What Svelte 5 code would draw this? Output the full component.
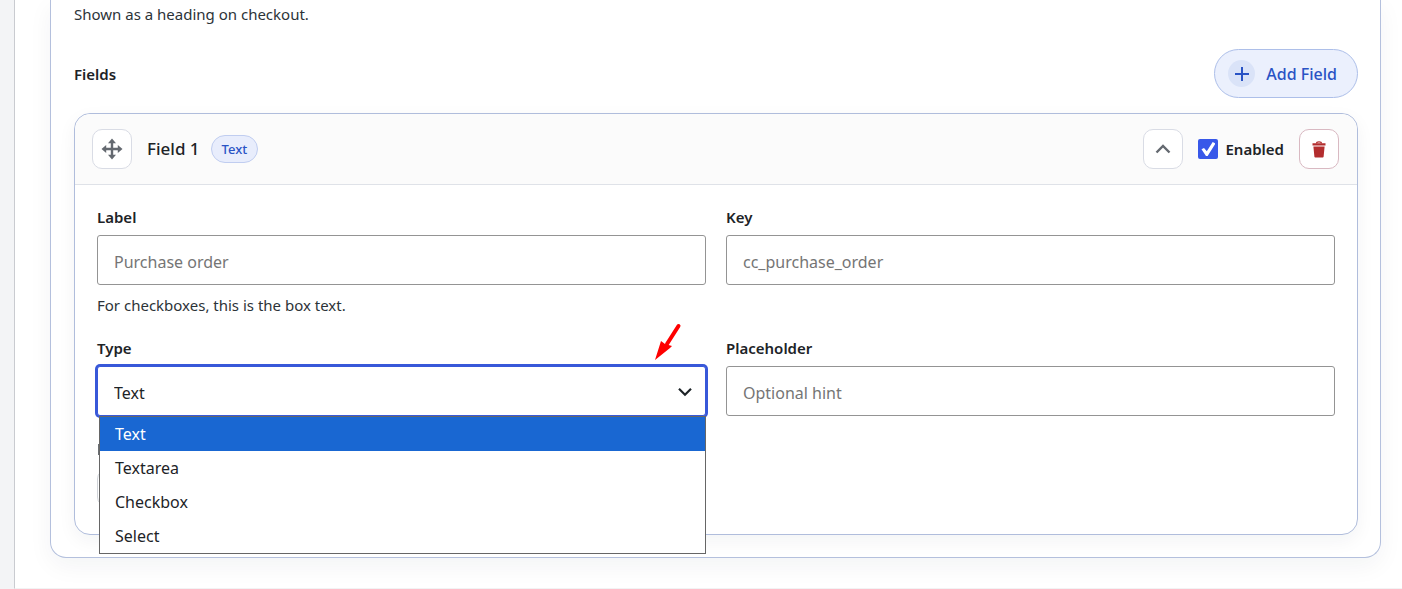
<script lang="ts">
	const types = ['Text', 'Textarea', 'Checkbox', 'Select'];

	let label = $state('');
	let key = $state('');
	let hint = $state('');
	let type = $state('Text');
	let enabled = $state(true);
	let menuOpen = $state(true);

	function pick(value: string) {
		type = value;
		menuOpen = false;
	}
</script>

<div class="page">
	<main class="panel">
		<section class="group">
			<p class="help">Shown as a heading on checkout.</p>

			<div class="group-bar">
				<h2>Fields</h2>
				<button class="add" type="button">
					<span class="plus">
						<svg width="16" height="16" viewBox="0 0 16 16"><path d="M8 1v14M1 8h14" fill="none" stroke="currentColor" stroke-width="2" /></svg>
					</span>
					Add Field
				</button>
			</div>

			<article class="field-card">
				<header>
					<button class="icon-btn" type="button" aria-label="Move field">
						<svg width="22" height="22" viewBox="0 0 22 22">
							<path d="M11 3v16M3 11h16" stroke="currentColor" stroke-width="2.4" />
							<path d="M11 0.5l4 4.7H7zM11 21.5l4-4.7H7zM0.5 11l4.7-4v8zM21.5 11l-4.7-4v8z" fill="currentColor" />
						</svg>
					</button>
					<h3>Field 1</h3>
					<span class="badge">{type}</span>

					<div class="actions">
						<button class="icon-btn" type="button" aria-label="Collapse field">
							<svg width="16" height="10" viewBox="0 0 16 10"><path d="M1.5 8.5L8 2l6.5 6.5" fill="none" stroke="currentColor" stroke-width="2.4" /></svg>
						</button>
						<label class="enabled">
							<input type="checkbox" bind:checked={enabled} />
							Enabled
						</label>
						<button class="icon-btn danger" type="button" aria-label="Delete field">
							<svg width="14" height="17" viewBox="0 0 14 17">
								<path d="M4.5 2.5c0-2.2 5-2.2 5 0" fill="none" stroke="currentColor" stroke-width="1.2" />
								<path d="M.5 2.3h13v2.2H.5zM1.4 5.4h11.2l-1 10.3q-.1.8-.9.8H3.3q-.8 0-.9-.8z" fill="currentColor" />
							</svg>
						</button>
					</div>
				</header>

				<div class="fields">
					<div class="field">
						<label for="label">Label</label>
						<input id="label" type="text" placeholder="Purchase order" bind:value={label} />
						<p class="help">For checkboxes, this is the box text.</p>
					</div>

					<div class="field">
						<label for="key">Key</label>
						<input id="key" type="text" placeholder="cc_purchase_order" bind:value={key} />
					</div>

					<div class="field">
						<label for="type">Type</label>
						<div class="select">
							<select id="type" class:open={menuOpen} bind:value={type}>
								{#each types as t}
									<option>{t}</option>
								{/each}
							</select>
							<svg class="chevron" width="14" height="10" viewBox="0 0 14 10"><path d="M1 1.8l6 6 6-6" fill="none" stroke="currentColor" stroke-width="2.2" /></svg>
							{#if menuOpen}
								<div class="menu" role="listbox" aria-label="Type">
									{#each types as t}
										<button type="button" role="option" aria-selected={t === type} onclick={() => pick(t)}>{t}</button>
									{/each}
								</div>
							{/if}
							<svg class="arrow" width="28" height="38" viewBox="0 0 28 38">
								<path d="M24.5 3L13 21" stroke="#fe0000" stroke-width="4" stroke-linecap="round" />
								<path d="M1 37L7 18l4 3 7 2-2 2z" fill="#fe0000" />
							</svg>
						</div>
					</div>

					<div class="field">
						<label for="hint">Placeholder</label>
						<input id="hint" type="text" placeholder="Optional hint" bind:value={hint} />
					</div>

					<div class="field covered">
						<button class="toggle" type="button" aria-label="Toggle option"></button>
					</div>
				</div>
			</article>
		</section>
	</main>
</div>

<style>
	:global(body) {
		margin: 0;
		background: #f3f4f6;
	}

	.page {
		padding-left: 14px;
		color: #1d2327;
		font-family: 'Segoe UI', 'Noto Sans', sans-serif;
		font-size: 15px;
		line-height: 22px;
	}

	.page * {
		box-sizing: border-box;
	}

	.panel {
		padding: 0 21px 30px 35px;
		border-left: 1px solid #c9cbd0;
		border-bottom: 1px solid #f2f3f4;
		background: #fff;
		overflow: hidden;
	}

	.group {
		padding: 3px 22px 22px 23px;
		border: 1px solid #b4c0dd;
		border-top: none;
		border-radius: 0 0 16px 16px;
		box-shadow: 0 8px 24px rgba(20, 30, 50, 0.05);
	}

	h2,
	h3,
	p {
		margin: 0;
	}

	button,
	input,
	select {
		font: inherit;
		color: inherit;
	}

	button {
		cursor: pointer;
	}

	.help {
		color: #2c3338;
	}

	.group-bar {
		display: flex;
		align-items: center;
		justify-content: space-between;
		margin: 24px 0 15px;
	}

	h2 {
		font-size: 15px;
		font-weight: 600;
	}

	.add {
		display: flex;
		align-items: center;
		gap: 11px;
		height: 49px;
		padding: 0 20px 0 13px;
		border: 1px solid #adbfe9;
		border-radius: 25px;
		background: #ebf0fd;
		color: #2953c5;
		font-size: 16px;
		font-weight: 500;
	}

	.plus {
		display: grid;
		place-items: center;
		width: 27px;
		height: 27px;
		border-radius: 50%;
		background: #dae3f8;
	}

	.field-card {
		border: 1px solid #b0bddc;
		border-radius: 16px;
		background: #fff;
		box-shadow: 0 6px 18px rgba(20, 30, 50, 0.05);
	}

	header {
		display: flex;
		align-items: center;
		padding: 15px 18px 15px 17px;
		border-bottom: 1px solid #dfe2e8;
		border-radius: 16px 16px 0 0;
		background: #fbfbfb;
	}

	.icon-btn {
		display: grid;
		place-items: center;
		width: 40px;
		height: 40px;
		padding: 0;
		border: 1px solid #d9dce5;
		border-radius: 10px;
		background: #fff;
		color: #646970;
	}

	.danger {
		border-color: #d9b9c2;
		color: #b32d2e;
	}

	h3 {
		margin: 0 11px 0 15px;
		font-size: 17px;
		font-weight: 500;
	}

	.badge {
		padding: 2px 10px;
		border: 1px solid #c0cdf0;
		border-radius: 14px;
		background: #e8edfc;
		color: #2953c5;
		font-size: 13px;
		font-weight: 500;
	}

	.actions {
		display: flex;
		align-items: center;
		gap: 15px;
		margin-left: auto;
	}

	.enabled {
		display: flex;
		align-items: center;
		gap: 7px;
		font-weight: 600;
	}

	.enabled input {
		display: grid;
		place-items: center;
		width: 20px;
		height: 20px;
		margin: 0;
		border-radius: 2px;
		background: #3858e9;
		appearance: none;
	}

	.enabled input:checked::before {
		width: 14px;
		height: 14px;
		background: #fff;
		clip-path: polygon(0 52%, 18% 42%, 38% 66%, 80% 0, 100% 10%, 44% 100%, 32% 100%);
		content: '';
	}

	.fields {
		display: grid;
		grid-template-columns: 1fr 1fr;
		gap: 21px 20px;
		padding: 21px 22px 27px;
	}

	.field > label {
		display: block;
		margin-bottom: 7px;
		font-weight: 600;
	}

	.field > input,
	select {
		display: block;
		width: 100%;
		height: 50px;
		padding: 4px 16px 0;
		border: 1px solid #949494;
		border-radius: 3px;
		outline: none;
		background: #fff;
		font-size: 16px;
	}

	.field > input::placeholder {
		color: #757575;
		opacity: 1;
	}

	.field .help {
		margin-top: 9px;
	}

	.select {
		position: relative;
	}

	select {
		appearance: none;
	}

	select.open {
		border-color: #3858d9;
		box-shadow: 0 0 0 2px #3858d9;
	}

	.chevron {
		position: absolute;
		top: 21px;
		right: 14px;
		pointer-events: none;
	}

	.menu {
		position: absolute;
		z-index: 1;
		top: 50px;
		right: 0;
		left: 2px;
		border: 1px solid #666;
		background: #fff;
	}

	.menu button {
		display: block;
		width: 100%;
		height: 34px;
		padding: 0 15px;
		border: none;
		background: none;
		color: #1d2327;
		font-size: 16px;
		text-align: left;
	}

	.menu button[aria-selected='true'] {
		background: #1967d2;
		color: #fff;
	}

	.arrow {
		position: absolute;
		top: -43px;
		right: 24px;
		pointer-events: none;
	}

	/* only the left edge of this row shows beside the open menu */
	.covered::before {
		display: block;
		width: 2px;
		height: 11px;
		margin: 7px 0 14px 1px;
		background: #6b6f73;
		content: '';
	}

	.toggle {
		display: block;
		width: 68px;
		height: 38px;
		border: 1px solid #d0d3d8;
		border-radius: 10px;
		background: #fff;
	}
</style>
